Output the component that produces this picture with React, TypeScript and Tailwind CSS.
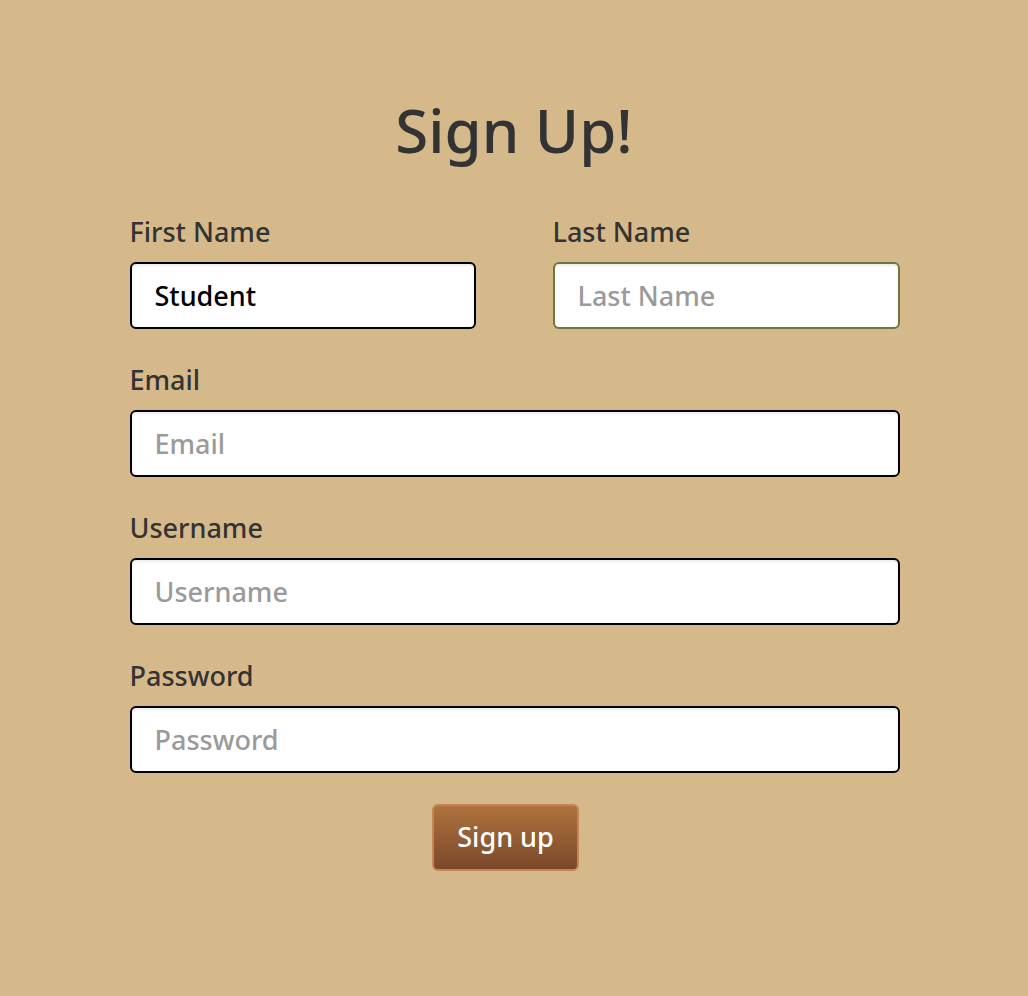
import React from "react";

const inputBase =
  "w-full h-[67px] rounded-[6px] bg-white px-[23px] text-[27px] font-medium text-black placeholder:text-[#9a9a9a] outline-none shadow-[inset_0_2px_3px_rgba(0,0,0,0.08)]";

function Field({
  label,
  placeholder,
  value,
  focused,
}: {
  label: string;
  placeholder: string;
  value?: string;
  focused?: boolean;
}) {
  return (
    <div className="flex flex-col">
      <label className="text-[27px] leading-[32px] font-medium text-[#333333] mb-[14px]">{label}</label>
      <input
        className={
          inputBase +
          (focused
            ? " border-2 border-[#6c7740] shadow-[0_0_6px_rgba(90,90,40,0.5)]"
            : " border-2 border-black")
        }
        placeholder={placeholder}
        defaultValue={value}
        autoFocus={focused}
      />
    </div>
  );
}

export default function App() {
  return (
    <div
      className="min-h-[996px] w-full bg-[#d6b98b] flex flex-col items-center"
      style={{ fontFamily: "'Noto Sans', Lato, sans-serif" }}
    >
      <h1 className="mt-[92px] text-[60px] leading-[76px] text-[#333333] font-medium">Sign Up!</h1>
      <form className="w-[770px] mt-[48px] ml-[1px] flex flex-col gap-[35px]">
        <div className="grid grid-cols-[346px_347px] gap-x-[77px]">
          <Field label="First Name" placeholder="First Name" value="Student" />
          <Field label="Last Name" placeholder="Last Name" focused />
        </div>
        <Field label="Email" placeholder="Email" />
        <Field label="Username" placeholder="Username" />
        <Field label="Password" placeholder="Password" />
        <div className="flex justify-center -mt-[4px] mr-[18px]">
          <button
            type="button"
            className="w-[147px] h-[67px] rounded-[6px] border-2 border-[#c48552] bg-gradient-to-b from-[#b0733f] to-[#7a4829] text-white text-[27px] font-medium"
          >
            Sign up
          </button>
        </div>
      </form>
    </div>
  );
}
